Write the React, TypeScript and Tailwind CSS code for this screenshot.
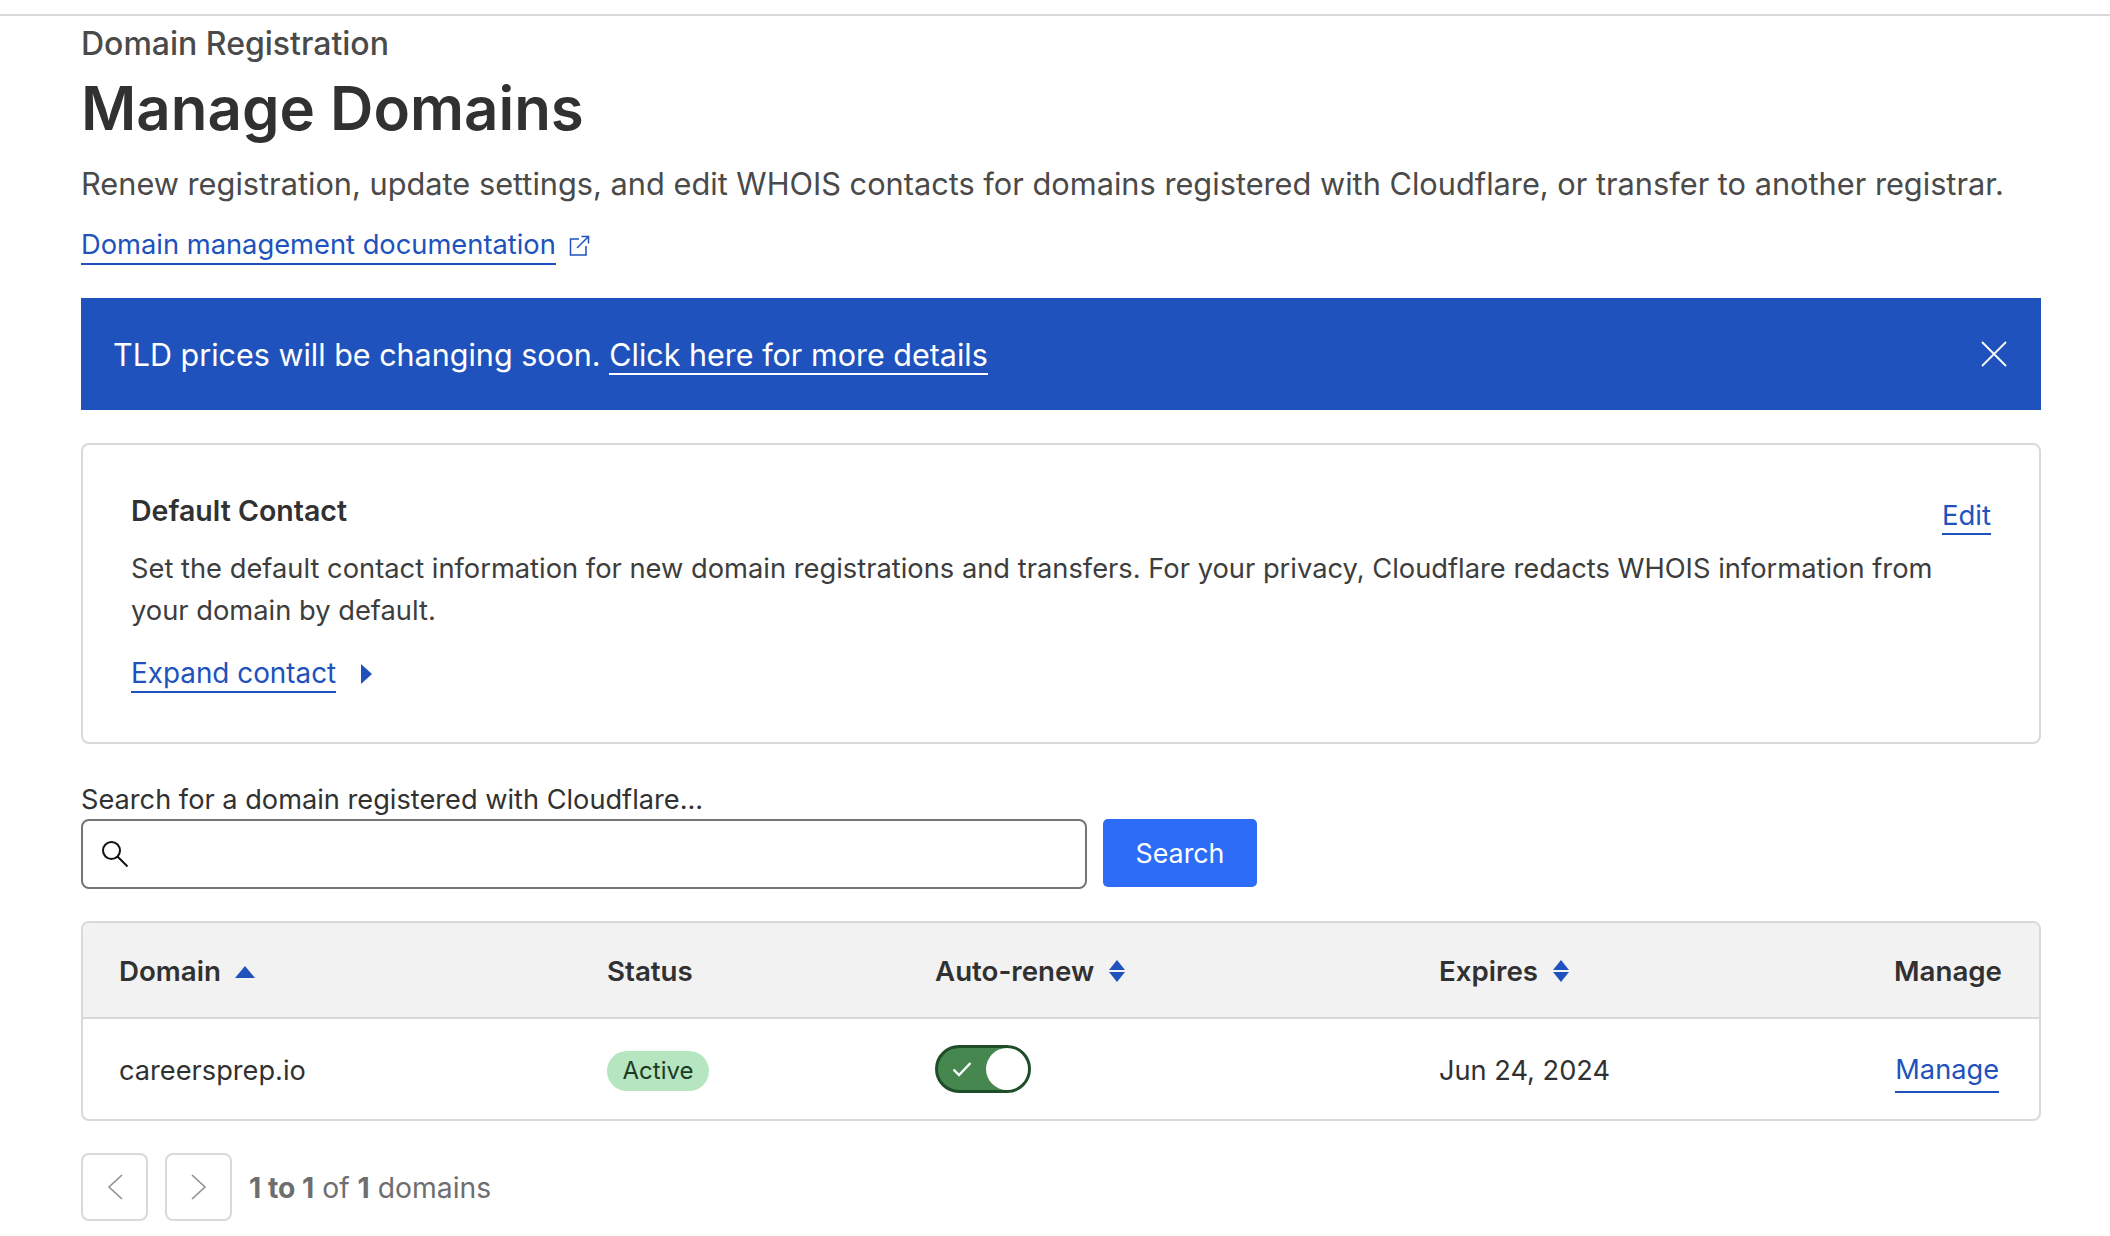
const font = '[font-family:Inter,"Liberation_Sans",sans-serif]';

function SortCaret() {
  return (
    <svg width="18" height="24" viewBox="0 0 18 24" fill="#2052bd" className="shrink-0">
      <path d="M9 1 17 11H1Z" />
      <path d="M1 13H17L9 23Z" />
    </svg>
  );
}

function ExternalIcon() {
  return (
    <svg width="22" height="22" viewBox="0 0 22 22" fill="none" stroke="#2052bd" strokeWidth="1.5">
      <path d="M11 4H2.5V20H18V11" />
      <path d="M9 13 20 2M13.5 1.5H20.5V8.5" />
    </svg>
  );
}

function Link({ children, className = '' }: { children: React.ReactNode; className?: string }) {
  return <a className={`border-b-2 border-[#2052bd] text-[#2052bd] ${className}`}>{children}</a>;
}

export default function App() {
  return (
    <div className={`${font} h-[1236px] overflow-hidden bg-white text-[#313131]`}>
      <div className="mt-[14px] h-[2px] bg-[#d9d9d9]" />
      <div className="flex flex-col pr-[69px] pl-[81px]">
        <div className="mt-[10px] text-[32px] leading-[36px] font-medium text-[#4a4a4a]">Domain Registration</div>
        <h1 className="mt-[10px] text-[60px] leading-[72px] font-semibold text-[#313131]">Manage Domains</h1>
        <p className="mt-[20px] text-[30.74px] leading-[40px] whitespace-nowrap text-[#4a4a4a]">
          Renew registration, update settings, and edit WHOIS contacts for domains registered with Cloudflare, or transfer to another registrar.
        </p>
        <div className="mt-[23px] flex items-center gap-[12px] text-[27.3px] leading-[36px]">
          <Link>Domain management documentation</Link>
          <ExternalIcon />
        </div>

        <div className="mt-[33px] flex h-[112px] items-center justify-between bg-[#2052bd] pr-[34px] pl-[32px] text-[30.5px] text-white">
          <div className="pt-[2px]">
            TLD prices will be changing soon. <a className="border-b-2 border-white">Click here for more details</a>
          </div>
          <svg width="26" height="26" viewBox="0 0 26 26" fill="none" stroke="white" strokeWidth="1.8">
            <path d="M1 1 25 25M25 1 1 25" />
          </svg>
        </div>

        <div className="mt-[33px] h-[301px] rounded-[8px] border-2 border-[#d9d9d9] px-[48px] pt-[48px]">
          <div className="flex items-start justify-between">
            <h2 className="text-[28.5px] leading-[36px] font-semibold">Default Contact</h2>
            <Link className="mt-[4px] text-[27.5px] leading-[36px]">Edit</Link>
          </div>
          <p className="mt-[13px] text-[27.3px] leading-[42px] text-[#3d3d3d]">
            Set the default contact information for new domain registrations and transfers. For your privacy, Cloudflare redacts WHOIS information from your domain by default.
          </p>
          <div className="mt-[23px] flex items-center gap-[24px] text-[27.85px] leading-[36px]">
            <Link>Expand contact</Link>
            <svg width="12" height="22" viewBox="0 0 12 22" fill="#2052bd">
              <path d="M1 1 12 11 1 21Z" />
            </svg>
          </div>
        </div>

        <label className="mt-[37px] mb-[1px] text-[27.2px] leading-[37px]">Search for a domain registered with Cloudflare...</label>
        <div className="flex items-start gap-[16px]">
          <div className="flex h-[70px] w-[1006px] items-center rounded-[8px] border-2 border-[#757575] pl-[18px]">
            <svg width="28" height="28" viewBox="0 0 28 28" fill="none" stroke="#111" strokeWidth="2">
              <circle cx="10.5" cy="10.5" r="8.5" />
              <path d="M16.5 16.5 26.5 26.5" />
            </svg>
          </div>
          <button type="button" className="h-[68px] w-[154px] rounded-[5px] bg-[#2c6cf6] text-[26.8px] text-white">
            Search
          </button>
        </div>

        <div className="mt-[32px] h-[200px] overflow-hidden rounded-[8px] border-2 border-[#d9d9d9]">
          <div className="grid h-[96px] grid-cols-[488px_328px_504px_1fr] items-center border-b-2 border-[#d9d9d9] bg-[#f2f2f2] pr-[37px] pl-[36px] text-[27.7px] font-semibold">
            <div className="flex items-center gap-[14px] pt-[3px]">
              Domain
              <svg width="20" height="13" viewBox="0 0 20 13" fill="#2052bd" className="shrink-0">
                <path d="M10 1 20 13H0Z" />
              </svg>
            </div>
            <div className="pt-[3px]">Status</div>
            <div className="flex items-center gap-[14px] pt-[3px]">
              Auto-renew <SortCaret />
            </div>
            <div className="flex items-center justify-between pt-[3px]">
              <span className="flex items-center gap-[14px]">
                Expires <SortCaret />
              </span>
              <span>Manage</span>
            </div>
          </div>
          <div className="grid h-[100px] grid-cols-[488px_328px_504px_1fr] items-center pr-[37px] pl-[36px] text-[27.2px]">
            <div className="pt-[5px]">careersprep.io</div>
            <div className="pt-[2px]">
              <span className="inline-flex h-[40px] w-[102px] items-center justify-center rounded-full bg-[#b5e6bf] text-[24px] text-[#1d3b24]">Active</span>
            </div>
            <div>
              <div className="flex h-[48px] w-[96px] items-center justify-between rounded-full border-[3px] border-[#1f4d2a] bg-[#46874f] pr-0 pl-[14px]">
                <svg width="20" height="16" viewBox="0 0 20 16" fill="none" stroke="white" strokeWidth="2.4">
                  <path d="M1.5 8.5 7 14 18.5 2" />
                </svg>
                <div className="h-[42px] w-[42px] rounded-full bg-white" />
              </div>
            </div>
            <div className="flex items-center justify-between pt-[5px]">
              <span>Jun 24, 2024</span>
              <Link className="mr-[3px]">Manage</Link>
            </div>
          </div>
        </div>

        <div className="mt-[32px] flex items-center gap-[17px]">
          <button type="button" className="flex h-[68px] w-[67px] items-center justify-center rounded-[8px] border-2 border-[#d9d9d9]">
            <svg width="16" height="26" viewBox="0 0 16 26" fill="none" stroke="#8f8f8f" strokeWidth="1.6">
              <path d="M15 1 2 13 15 25" />
            </svg>
          </button>
          <button type="button" className="flex h-[68px] w-[67px] items-center justify-center rounded-[8px] border-2 border-[#d9d9d9]">
            <svg width="16" height="26" viewBox="0 0 16 26" fill="none" stroke="#8f8f8f" strokeWidth="1.6">
              <path d="M1 1 14 13 1 25" />
            </svg>
          </button>
          <div className="pt-[3px] text-[28.3px] text-[#6e6e6e]">
            <b className="font-bold">1 to 1</b> of <b className="font-bold">1</b> domains
          </div>
        </div>
      </div>
    </div>
  );
}
